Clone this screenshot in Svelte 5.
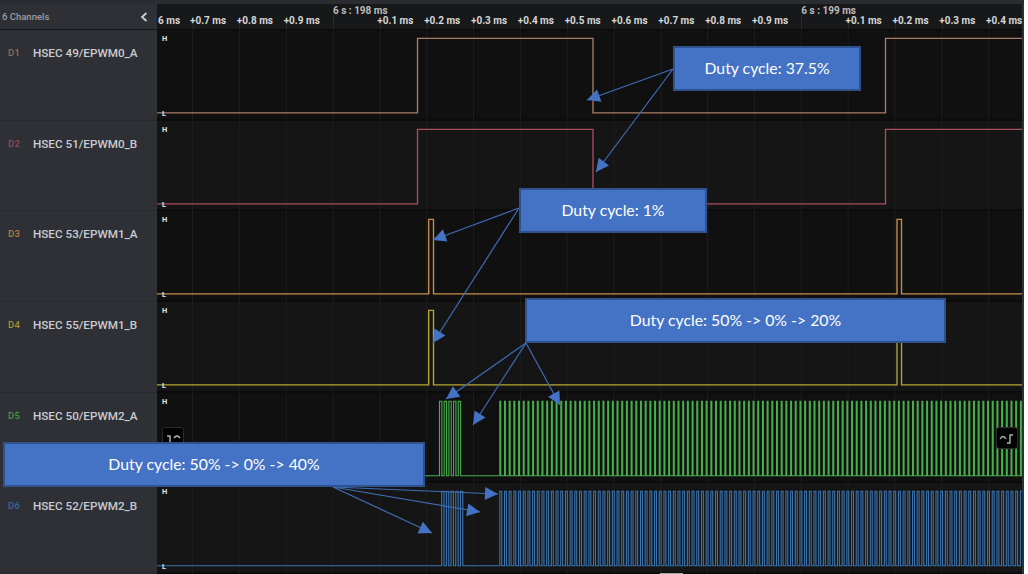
<script>
	// time axis: one tick every 0.1 ms, 46.83 px apart on screen
	const SIDE = 157
	const STEP = 46.83
	const HIGH = 8.3
	const LOW = 82.8
	const END = 1022 - SIDE

	const tickX = (i) => 192.5 + STEP * i - SIDE
	const ticks = Array.from({ length: 18 }, (_, i) => tickX(i))

	const tenths = [7, 8, 9, 0, 1, 2, 3, 4, 5, 6, 7, 8, 9, 0, 1, 2, 3, 4]
	const labels = tenths
		.map((t, i) => ({ text: `+0.${t} ms`, x: tickX(i) - 2.5, major: t === 0 }))
		.filter((l) => !l.major)
	const majors = [
		{ text: "6 s : 198 ms", x: tickX(3) },
		{ text: "6 s : 199 ms", x: tickX(13) }
	]

	// pulses are [rise, fall] in screen x
	function train(start, stop, period, width) {
		const out = []
		for (let x = start; x < stop; x += period) out.push([x, Math.min(x + width, stop)])
		return out
	}

	const rows = [
		{ id: "D1", name: "HSEC 49/EPWM0_A", color: "#a87c66", weight: 1.35, pulses: [[417.5, 593], [885.5, 1100]] },
		{ id: "D2", name: "HSEC 51/EPWM0_B", color: "#a84f5e", weight: 1.35, pulses: [[417.5, 593], [885.5, 1100]] },
		{ id: "D3", name: "HSEC 53/EPWM1_A", color: "#c98f4a", weight: 1.35, pulses: [[428.7, 433.5], [897, 901.5]] },
		{ id: "D4", name: "HSEC 55/EPWM1_B", color: "#b8a832", weight: 1.35, pulses: [[428.7, 433.5], [897, 901.5]] },
		{
			id: "D5",
			name: "HSEC 50/EPWM2_A",
			color: "#48ad4c",
			weight: 1.1,
			hideLow: true, // the callout sits on top of it
			pulses: [...train(439.5, 461, 4.69, 2.35), ...train(499.8, 1022, 4.69, 0.95)]
		},
		{
			id: "D6",
			name: "HSEC 52/EPWM2_B",
			color: "#3a74b0",
			weight: 1.1,
			pulses: [...train(441.7, 464, 4.69, 2.35), ...train(499.8, 1022, 4.69, 1.9)]
		}
	]

	function wavePath(pulses) {
		let d = `M0 ${LOW}`
		for (const [a, b] of pulses) {
			const rise = a - SIDE
			const fall = b - SIDE
			d += `H${rise}V${HIGH}H${Math.min(fall, END)}`
			if (fall < END) d += `V${LOW}`
		}
		if (pulses[pulses.length - 1][1] - SIDE < END) d += `H${END}`
		return d
	}

	const callouts = [
		{ text: "Duty cycle: 37.5%", x: 673, y: 46, w: 188 },
		{ text: "Duty cycle: 1%", x: 519, y: 188, w: 188 },
		{ text: "Duty cycle: 50% -> 0% -> 20%", x: 525, y: 298, w: 421 },
		{ text: "Duty cycle: 50% -> 0% -> 40%", x: 3, y: 442, w: 422 }
	]

	const arrows = [
		[673, 69, 587, 100],
		[673, 69, 596, 172],
		[519, 208, 433, 240],
		[519, 208, 433, 343],
		[526, 343, 446, 399],
		[526, 343, 473, 425],
		[526, 343, 560, 405],
		[333, 487, 432, 533],
		[333, 487, 480, 512],
		[333, 487, 498, 494]
	]

	// triangle head, tip at the end of the line
	function head([x1, y1, x2, y2]) {
		const len = Math.hypot(x2 - x1, y2 - y1)
		const ux = (x2 - x1) / len
		const uy = (y2 - y1) / len
		const bx = x2 - ux * 13
		const by = y2 - uy * 13
		return `${x2},${y2} ${bx - uy * 6.5},${by + ux * 6.5} ${bx + uy * 6.5},${by - ux * 6.5}`
	}
</script>

<div class="screen">
	<div class="strip"></div>

	<div class="side-head">
		<span>6 Channels</span>
		<svg class="chevron" viewBox="0 0 8 10" width="8" height="10">
			<path d="M6.5 1 L2 5 L6.5 9" fill="none" stroke="#d0d0d4" stroke-width="1.8" />
		</svg>
	</div>

	<div class="axis">
		<span class="clipped">6 ms</span>
		{#each ticks as x}
			<i class="tick" style="left: {x}px"></i>
		{/each}
		{#each majors as m}
			<i class="tick tall" style="left: {m.x}px"></i>
			<span class="major" style="left: {m.x}px">{m.text}</span>
		{/each}
		{#each labels as l}
			<span class="label" style="left: {l.x}px">{l.text}</span>
		{/each}
	</div>

	{#each rows as row, r}
		<div class="channel">
			<span class="id" style="color: {row.color}">{row.id}</span>
			<span class="name">{row.name}</span>
		</div>
		<div class="track" class:even={r % 2 === 1}>
			<svg class="wave">
				{#each ticks as x}
					<line x1={x} x2={x} y1="0" y2="100" stroke="#1d1d1d" />
				{/each}
				<path d={wavePath(row.pulses)} fill="none" stroke={row.color} stroke-width={row.weight} />
			</svg>
			<b class="level high">H</b>
			{#if !row.hideLow}
				<b class="level low">L</b>
			{/if}
		</div>
	{/each}

	<div class="edge"></div>

	<button class="nav left" aria-label="previous edge">
		<svg viewBox="0 0 20 20" width="20" height="20">
			<path d="M4 8 H7 V15 H10 M11 10 Q14 6 17 10" fill="none" stroke="#b4b4b4" stroke-width="1.4" />
		</svg>
	</button>
	<button class="nav right" aria-label="next edge">
		<svg viewBox="0 0 20 20" width="20" height="20">
			<path d="M3 11 Q6 6 9 11 M10 15 H13 V7 H16" fill="none" stroke="#b4b4b4" stroke-width="1.4" />
		</svg>
	</button>

	<i class="thumb"></i>

	<svg class="arrows">
		{#each arrows as a}
			<line x1={a[0]} y1={a[1]} x2={a[2]} y2={a[3]} stroke="#3f6db8" stroke-width="1.2" />
			<polygon points={head(a)} fill="#4472c4" />
		{/each}
	</svg>

	{#each callouts as c}
		<div class="callout" style="left: {c.x}px; top: {c.y}px; width: {c.w}px">{c.text}</div>
	{/each}
</div>

<style>
	:global(body) {
		background: #fff;
	}

	.screen {
		position: relative;
		width: 1024px;
		height: 574px;
		overflow: hidden;
		display: grid;
		grid-template-columns: 157px 865px 2px;
		grid-template-rows: 4px 26px repeat(6, minmax(0, 1fr));
		background: #2e3036;
		font-family: Roboto, "Liberation Sans", sans-serif;
	}

	.strip {
		grid-column: 1 / -1;
		background: #2a2c31;
	}

	.side-head {
		display: flex;
		align-items: center;
		justify-content: space-between;
		padding: 0 9px 0 2px;
		border-bottom: 1px solid #17181b;
		color: #9c9ea2;
		font-size: 9.5px;
		font-weight: 500;
	}

	.axis {
		position: relative;
		overflow: hidden;
		grid-column: 2;
		background: #17181a;
		border-bottom: 1px solid #0a0a0a;
		color: #d6d6d6;
		font-size: 10px;
		font-weight: 700;
	}

	.axis span {
		position: absolute;
		white-space: nowrap;
	}

	.clipped {
		left: 1px;
		top: 11px;
	}

	.label {
		top: 11px;
	}

	.major {
		top: 1px;
		color: #bcbcbc;
	}

	.tick {
		position: absolute;
		bottom: 0;
		width: 1px;
		height: 5px;
		background: #2a2a2a;
	}

	.tick.tall {
		height: 14px;
	}

	.edge {
		grid-column: 3;
		grid-row: 2 / -1;
		background: #2e3036;
	}

	.channel {
		grid-column: 1;
		display: flex;
		align-items: flex-start;
		gap: 14px;
		padding: 16px 0 0 8px;
		border-bottom: 1px solid #27292d;
		color: #cbccd0;
		font-size: 11.7px;
		font-weight: 500;
	}

	.id {
		width: 11px;
		margin-top: 1px;
		font-size: 9.5px;
		letter-spacing: 0.3px;
		opacity: 0.85;
	}

	.track {
		position: relative;
		grid-column: 2;
		background: #101010;
		box-shadow: inset 0 -2px 0 #0b0b0b;
	}

	.track.even {
		background: #151515;
	}

	.wave {
		position: absolute;
		inset: 0;
		width: 100%;
		height: 100%;
	}

	.level {
		position: absolute;
		left: 5px;
		color: #e4e4e4;
		font-size: 7.5px;
		line-height: 8px;
	}

	.high {
		top: 5px;
	}

	.low {
		top: 80px;
	}

	.nav {
		position: absolute;
		top: 427px;
		width: 22px;
		height: 22px;
		padding: 0;
		display: flex;
		background: #000;
		border: 1px solid #2b2b2b;
		border-radius: 3px;
	}

	.nav.left {
		left: 162px;
	}

	.nav.right {
		left: 996px;
	}

	.thumb {
		position: absolute;
		left: 660px;
		bottom: 0;
		width: 23px;
		height: 1px;
		background: #a8a8a8;
	}

	.arrows {
		position: absolute;
		inset: 0;
		width: 100%;
		height: 100%;
		pointer-events: none;
	}

	.callout {
		position: absolute;
		box-sizing: border-box;
		height: 45px;
		padding-bottom: 2px;
		display: flex;
		align-items: center;
		justify-content: center;
		background: #4472c4;
		border: 2px solid #2f528f;
		color: #fff;
		font-family: Lato, "Open Sans", sans-serif;
		font-size: 15.8px;
	}
</style>
